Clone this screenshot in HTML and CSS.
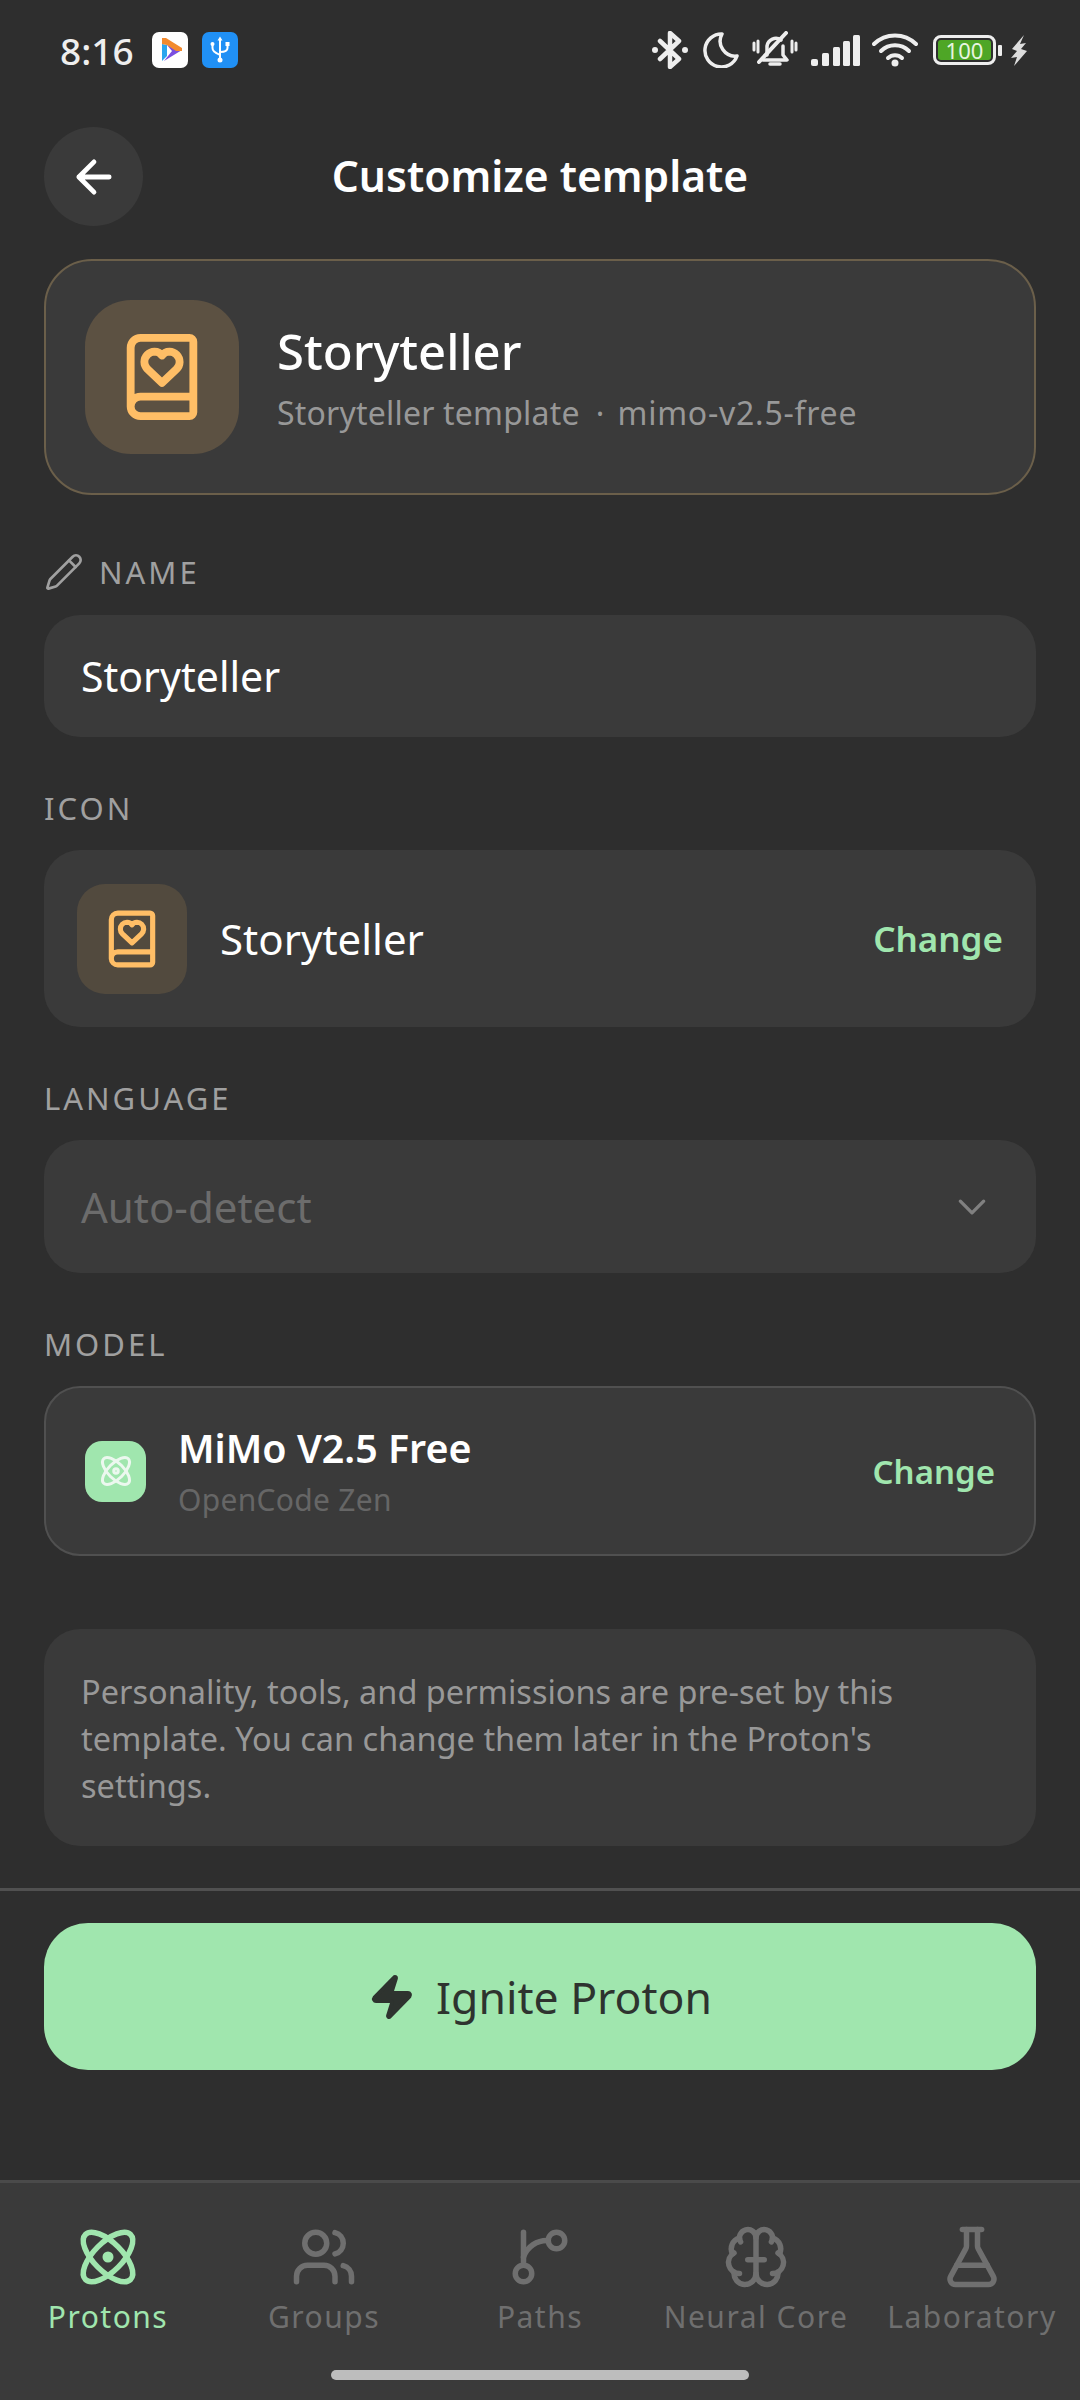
FILE: index.html
```html
<!DOCTYPE html>
<html lang="en">
<head>
    <meta charset="UTF-8">
    <meta name="viewport" content="width=device-width, initial-scale=1.0">
    <title>Customize template</title>
    <link rel="stylesheet" href="styles.css">
</head>
<body>
    <div class="status-bar">
        <span class="time">8:16</span>
        <svg class="app-badge" viewBox="0 0 36 36">
            <rect width="36" height="36" rx="7" fill="#fff"/>
            <path d="M10 12l5 1v11l-5 5z" fill="#2aa5ee"/>
            <path d="M15 13l15 5-18 11 8-10z" fill="#7a4fe0"/>
            <path d="M10 6h4l16 10v3h-6l-9-6-5-1z" fill="#f28a2e"/>
        </svg>
        <svg class="app-badge" viewBox="0 0 36 36" fill="none" stroke="#fff" stroke-width="2" stroke-linecap="round">
            <rect width="36" height="36" rx="7" fill="#2090f5" stroke="none"/>
            <path d="M18 7v22M10.500 13v3c0 3 2 4 7.500 7M25.500 13v3c0 3-2 4-7.500 4"/>
            <path d="M18 4.500l-2.500 4h5z" fill="#fff" stroke="none"/>
            <circle cx="18" cy="28" r="2.500" fill="#fff" stroke="none"/>
            <circle cx="10.500" cy="12" r="2" fill="#fff" stroke="none"/>
            <rect x="23.500" y="10" width="4" height="4" fill="#fff" stroke="none"/>
        </svg>
        <div class="status-right">
            <svg class="st-bt" viewBox="0 0 36 38" fill="none" stroke="#eee" stroke-width="4.500" stroke-linecap="round" stroke-linejoin="round">
                <path d="M8 10l19 18-9 8V2l9 8L8 28"/>
                <circle cx="3" cy="19" r="3" fill="#eee" stroke="none"/>
                <circle cx="33" cy="19" r="3" fill="#eee" stroke="none"/>
            </svg>
            <svg class="st-moon" viewBox="0 0 36 36" fill="none" stroke="#eee" stroke-width="3.500" stroke-linecap="round" stroke-linejoin="round">
                <path d="M19 2A16.500 16.500 0 1 0 34 24 15 15 0 0 1 19 2z"/>
            </svg>
            <svg class="st-bell" viewBox="0 0 46 38" fill="none" stroke="#eee" stroke-width="3.500" stroke-linecap="round" stroke-linejoin="round">
                <path d="M15 24v-9a9 9 0 0 1 14-6M31 15v9l4 5H11"/>
                <path d="M18 33h10"/>
                <path d="M34 2L7 31" stroke-width="4"/>
                <path d="M2 12v7M6 10v11M40 10v11M44 12v7" stroke-width="3"/>
            </svg>
            <svg class="st-signal" viewBox="0 0 49 31" fill="#eee">
                <rect x="0" y="24" width="7" height="7" rx="2"/>
                <rect x="11" y="18" width="7" height="13" rx="1.500"/>
                <rect x="22" y="12" width="7" height="19" rx="1.500"/>
                <rect x="32" y="6" width="7" height="25" rx="1.500"/>
                <rect x="42" y="0" width="7" height="31" rx="1.500"/>
            </svg>
            <svg class="st-wifi" viewBox="0 0 46 34" fill="none" stroke="#eee" stroke-width="4" stroke-linecap="round">
                <path d="M2 11a30 30 0 0 1 42 0"/>
                <path d="M9 18a20 20 0 0 1 28 0"/>
                <path d="M16 25a10 10 0 0 1 14 0"/>
                <circle cx="23" cy="30" r="3.500" fill="#eee" stroke="none"/>
            </svg>
            <div class="battery">
                <div class="battery-body"><span class="battery-level">100</span></div>
                <div class="battery-tip"></div>
            </div>
            <svg class="st-bolt" viewBox="0 0 18 31" fill="#ddd">
                <path d="M14 0L2 14l5 2-6 7 6-1-3 9 13-15-6-2 5-6-6 1z"/>
            </svg>
        </div>
    </div>

    <div class="top-bar">
        <div class="back-btn">
            <svg class="icon-back" viewBox="0 0 24 24" fill="none" stroke="#fff" stroke-width="2.200" stroke-linecap="round" stroke-linejoin="round">
                <path d="M12 19l-7-7 7-7M19 12H5"/>
            </svg>
        </div>
        <h1>Customize template</h1>
    </div>

    <div class="content">
        <div class="hero-card">
            <div class="hero-icon">
                <svg class="icon-book-lg" viewBox="0 0 24 24" fill="none" stroke="#ffbe66" stroke-width="2" stroke-linecap="round" stroke-linejoin="round">
                    <path d="M16.500 8.200A2.700 2.700 0 0 0 13.900 5.500c-.8 0-1.500.4-1.900 1-.4-.6-1.100-1-1.900-1A2.700 2.700 0 0 0 7.500 8.200c0 .7.3 1.300.8 1.800L12 13.500l3.700-3.500a2.600 2.600 0 0 0 .8-1.800"/>
                    <path d="M4 19.500v-15A2.500 2.500 0 0 1 6.500 2H19a1 1 0 0 1 1 1v18a1 1 0 0 1-1 1H6.500a1 1 0 0 1 0-5H20"/>
                </svg>
            </div>
            <div>
                <div class="hero-title">Storyteller</div>
                <div class="hero-sub">Storyteller template<span class="hero-sep">·</span><span class="hero-model">mimo-v2.5-free</span></div>
            </div>
        </div>

        <div class="field-label label-name">
            <svg class="icon-pencil" viewBox="0 0 24 24" fill="none" stroke="#a0a0a0" stroke-width="1.600" stroke-linecap="round" stroke-linejoin="round">
                <path d="M21.170 6.810a2.800 2.800 0 0 0-3.980-3.990L3.840 16.170a2 2 0 0 0-.5.830l-1.320 4.360a.5.5 0 0 0 .62.620l4.350-1.320a2 2 0 0 0 .83-.5z"/>
                <path d="M15 5l4 4"/>
            </svg>
            NAME
        </div>
        <div class="input-box">Storyteller</div>

        <div class="field-label">ICON</div>
        <div class="icon-row">
            <div class="small-icon">
                <svg class="icon-book-sm" viewBox="0 0 24 24" fill="none" stroke="#ffbe66" stroke-width="2" stroke-linecap="round" stroke-linejoin="round">
                    <path d="M16.500 8.200A2.700 2.700 0 0 0 13.900 5.500c-.8 0-1.500.4-1.900 1-.4-.6-1.100-1-1.900-1A2.700 2.700 0 0 0 7.500 8.200c0 .7.3 1.300.8 1.800L12 13.500l3.700-3.500a2.600 2.600 0 0 0 .8-1.800"/>
                    <path d="M4 19.500v-15A2.500 2.500 0 0 1 6.500 2H19a1 1 0 0 1 1 1v18a1 1 0 0 1-1 1H6.500a1 1 0 0 1 0-5H20"/>
                </svg>
            </div>
            <span class="icon-name">Storyteller</span>
            <span class="change">Change</span>
        </div>

        <div class="field-label">LANGUAGE</div>
        <div class="select-box">
            <span>Auto-detect</span>
            <svg class="icon-chevron" viewBox="0 0 24 24" fill="none" stroke="#808080" stroke-width="2" stroke-linecap="round" stroke-linejoin="round">
                <path d="M5 8.500l7 7 7-7"/>
            </svg>
        </div>

        <div class="field-label">MODEL</div>
        <div class="model-card">
            <div class="model-icon">
                <svg class="icon-atom-sm" viewBox="0 0 24 24" fill="none" stroke="#ecf8ef" stroke-width="2" stroke-linecap="round" stroke-linejoin="round">
                    <circle cx="12" cy="12" r="1.500"/>
                    <path d="M20.200 20.200c2.040-2.030.02-7.360-4.500-11.900-4.540-4.520-9.870-6.540-11.900-4.500-2.040 2.030-.02 7.360 4.500 11.900 4.540 4.520 9.870 6.540 11.900 4.500z"/>
                    <path d="M15.700 15.700c4.520-4.540 6.540-9.870 4.500-11.900-2.030-2.040-7.360-.02-11.900 4.500-4.520 4.540-6.540 9.870-4.500 11.900 2.030 2.040 7.360.02 11.900-4.500z"/>
                </svg>
            </div>
            <div class="model-text">
                <div class="model-name">MiMo V2.5 Free</div>
                <div class="model-sub">OpenCode Zen</div>
            </div>
            <span class="change change-sm">Change</span>
        </div>

        <div class="info-box">Personality, tools, and permissions are pre-set by this template. You can change them later in the Proton's settings.</div>
    </div>

    <div class="action-bar">
        <div class="ignite-btn">
            <svg class="icon-zap" viewBox="0 0 24 24" fill="#2e332f" stroke="#2e332f" stroke-width="2" stroke-linecap="round" stroke-linejoin="round">
                <path d="M4 14a1 1 0 0 1-.78-1.630l9.900-10.200a.5.5 0 0 1 .86.46l-1.920 6.020A1 1 0 0 0 13 10h7a1 1 0 0 1 .78 1.630l-9.900 10.200a.5.5 0 0 1-.86-.46l1.920-6.020A1 1 0 0 0 11 14z"/>
            </svg>
            Ignite Proton
        </div>
    </div>

    <div class="tab-bar">
        <div class="tab tab-active">
            <svg class="tab-icon" viewBox="0 0 24 24" fill="none" stroke="#a0e6ae" stroke-width="2" stroke-linecap="round" stroke-linejoin="round">
                <circle cx="12" cy="12" r="1" fill="#a0e6ae"/>
                <path d="M20.200 20.200c2.040-2.030.02-7.360-4.500-11.900-4.540-4.520-9.870-6.540-11.900-4.500-2.040 2.030-.02 7.360 4.500 11.900 4.540 4.520 9.870 6.540 11.900 4.500z"/>
                <path d="M15.700 15.700c4.520-4.540 6.540-9.870 4.500-11.900-2.030-2.040-7.360-.02-11.900 4.500-4.520 4.540-6.540 9.870-4.500 11.900 2.030 2.040 7.360.02 11.900-4.500z"/>
            </svg>
            <span>Protons</span>
        </div>
        <div class="tab">
            <svg class="tab-icon" viewBox="0 0 24 24" fill="none" stroke="#6f6f6f" stroke-width="2" stroke-linecap="round" stroke-linejoin="round">
                <path d="M16 21v-2a4 4 0 0 0-4-4H6a4 4 0 0 0-4 4v2"/>
                <circle cx="9" cy="7" r="4"/>
                <path d="M22 21v-2a4 4 0 0 0-3-3.870"/>
                <path d="M16 3.130a4 4 0 0 1 0 7.750"/>
            </svg>
            <span>Groups</span>
        </div>
        <div class="tab">
            <svg class="tab-icon" viewBox="0 0 24 24" fill="none" stroke="#6f6f6f" stroke-width="2" stroke-linecap="round" stroke-linejoin="round">
                <path d="M6 3v12"/>
                <circle cx="18" cy="6" r="3"/>
                <circle cx="6" cy="18" r="3"/>
                <path d="M6 12a9 9 0 0 1 9-6"/>
            </svg>
            <span>Paths</span>
        </div>
        <div class="tab">
            <svg class="tab-icon" viewBox="0 0 24 24" fill="none" stroke="#6f6f6f" stroke-width="2" stroke-linecap="round" stroke-linejoin="round">
                <path d="M12 18V5"/>
                <path d="M9 13h6"/>
                <path d="M17.600 6.500A3 3 0 1 0 12 5a3 3 0 1 0-5.600 1.500"/>
                <path d="M18 5.120a4 4 0 0 1 2.520 5.770"/>
                <path d="M18 18a4 4 0 0 0 2-7.460"/>
                <path d="M19.970 17.480A4 4 0 1 1 12 18a4 4 0 1 1-7.970-.52"/>
                <path d="M6 18a4 4 0 0 1-2-7.460"/>
                <path d="M6 5.120a4 4 0 0 0-2.520 5.770"/>
            </svg>
            <span>Neural Core</span>
        </div>
        <div class="tab">
            <svg class="tab-icon" viewBox="0 0 24 24" fill="none" stroke="#6f6f6f" stroke-width="2" stroke-linecap="round" stroke-linejoin="round">
                <path d="M14 2v6a2 2 0 0 0 .25.96l5.500 10.080A2 2 0 0 1 18 22H6a2 2 0 0 1-1.750-2.960l5.500-10.080A2 2 0 0 0 10 8V2"/>
                <path d="M6.450 15h11.100"/>
                <path d="M8.500 2h7"/>
            </svg>
            <span>Laboratory</span>
        </div>
        <div class="home-indicator"></div>
    </div>
</body>
</html>
```

FILE: styles.css
```css
* {
    box-sizing: border-box;
}
body {
    margin: 0;
    width: 1080px;
    height: 2400px;
    overflow: hidden;
    display: flex;
    flex-direction: column;
    background: #2e2e2e;
    color: #fff;
    font-family: "Noto Sans", sans-serif;
}

/* status bar */
.status-bar {
    height: 100px;
    padding: 0 52px 0 60px;
    display: flex;
    align-items: center;
}
.time {
    font-size: 37px;
    font-weight: 500;
    color: #eee;
    width: 92px;
}
.app-badge {
    width: 36px;
    height: 36px;
    margin-right: 14px;
}
.status-right {
    margin-left: auto;
    display: flex;
    align-items: center;
}
.st-bt { width: 36px; height: 38px; margin-right: 15px; }
.st-moon { width: 36px; height: 36px; margin-right: 13px; }
.st-bell { width: 46px; height: 38px; margin-right: 13px; }
.st-signal { width: 49px; height: 31px; margin-right: 12px; }
.st-wifi { width: 46px; height: 34px; margin-right: 15px; }
.st-bolt { width: 18px; height: 31px; margin-left: 8px; }
.battery {
    display: flex;
    align-items: center;
}
.battery-body {
    width: 63px;
    height: 30px;
    border: 3px solid #eee;
    border-radius: 8px;
    padding: 2px;
}
.battery-level {
    display: block;
    height: 100%;
    background: #4ea626;
    border-radius: 3px;
    color: #e8f5e0;
    font-size: 22px;
    line-height: 20px;
    text-align: center;
}
.battery-tip {
    width: 4px;
    height: 11px;
    margin-left: 2px;
    background: #eee;
    border-radius: 1px;
}

/* header */
.top-bar {
    position: relative;
    height: 159px;
    padding: 27px 44px 0;
    flex-shrink: 0;
}
.back-btn {
    width: 99px;
    height: 99px;
    border-radius: 50%;
    background: #3a3a3a;
    display: flex;
    align-items: center;
    justify-content: center;
}
.icon-back {
    width: 52px;
    height: 52px;
}
h1 {
    position: absolute;
    top: 27px;
    left: 0;
    right: 0;
    margin: 0;
    line-height: 97px;
    text-align: center;
    font-size: 42.500px;
    font-weight: 600;
}

/* form */
.content {
    padding: 0 44px;
    flex: 1;
}
.hero-card {
    height: 236px;
    padding: 0 39px;
    display: flex;
    align-items: center;
    gap: 38px;
    background: #3a3a3a;
    border: 2px solid #6b5f4a;
    border-radius: 48px;
}
.hero-icon {
    width: 154px;
    height: 154px;
    border-radius: 46px;
    background: #5c5142;
    display: flex;
    align-items: center;
    justify-content: center;
}
.icon-book-lg {
    width: 94px;
    height: 94px;
}
.hero-title {
    font-size: 49px;
    line-height: 66px;
    font-weight: 500;
}
.hero-sub {
    font-size: 32px;
    line-height: 46px;
    margin-top: 6px;
    letter-spacing: 0.200px;
    color: #989898;
}
.hero-sep {
    margin: 0 13px 0 16px;
}
.hero-model {
    letter-spacing: 0.750px;
}
.field-label {
    height: 44px;
    margin: 49px 0 20px;
    display: flex;
    align-items: center;
    font-size: 31px;
    letter-spacing: 3px;
    color: #a0a0a0;
}
.label-name {
    margin: 55px 0 21px;
}
.icon-pencil {
    width: 40px;
    height: 40px;
    margin-right: 15px;
}
.input-box {
    height: 122px;
    padding: 0 37px;
    display: flex;
    align-items: center;
    background: #3a3a3a;
    border-radius: 36px;
    font-size: 41px;
}
.icon-row {
    height: 177px;
    padding: 0 33px;
    display: flex;
    align-items: center;
    background: #3a3a3a;
    border-radius: 36px;
}
.small-icon {
    width: 110px;
    height: 110px;
    border-radius: 28px;
    background: #524a3e;
    display: flex;
    align-items: center;
    justify-content: center;
}
.icon-book-sm {
    width: 62px;
    height: 62px;
}
.icon-name {
    margin-left: 33px;
    font-size: 42px;
}
.change {
    margin-left: auto;
    font-size: 35px;
    font-weight: 600;
    color: #a0e6ae;
}
.change-sm {
    font-size: 33px;
    margin-right: 5px;
}
.select-box {
    height: 133px;
    padding: 0 37px;
    display: flex;
    align-items: center;
    justify-content: space-between;
    background: #3a3a3a;
    border-radius: 36px;
    font-size: 42px;
    color: #6c6c6c;
}
.icon-chevron {
    width: 40px;
    height: 40px;
    margin-right: 7px;
}
.model-card {
    height: 170px;
    padding: 0 34px 0 39px;
    display: flex;
    align-items: center;
    background: #3a3a3a;
    border: 2px solid #505050;
    border-radius: 36px;
}
.model-icon {
    width: 61px;
    height: 61px;
    border-radius: 17px;
    background: #a0e6ae;
    display: flex;
    align-items: center;
    justify-content: center;
}
.icon-atom-sm {
    width: 36px;
    height: 36px;
}
.model-text {
    margin-left: 32px;
}
.model-name {
    font-size: 39.400px;
    line-height: 50px;
    font-weight: 600;
}
.model-sub {
    font-size: 30px;
    line-height: 40px;
    margin-top: 7px;
    letter-spacing: 0.300px;
    color: #666;
}
.info-box {
    margin-top: 73px;
    padding: 39px 37px 0;
    height: 217px;
    background: #3a3a3a;
    border-radius: 36px;
    font-size: 32.500px;
    line-height: 47px;
    color: #989898;
}

/* bottom action */
.action-bar {
    height: 292px;
    padding: 32px 44px 0;
    border-top: 3px solid #505050;
    flex-shrink: 0;
}
.ignite-btn {
    height: 147px;
    border-radius: 44px;
    background: #a0e6ae;
    color: #2e332f;
    display: flex;
    align-items: center;
    justify-content: center;
    gap: 20px;
    font-size: 44.500px;
}
.icon-zap {
    width: 48px;
    height: 48px;
}

/* nav */
.tab-bar {
    position: relative;
    height: 220px;
    display: flex;
    background: #3a3a3a;
    border-top: 3px solid #4a4a4a;
    flex-shrink: 0;
}
.tab {
    flex: 1;
    padding-top: 41px;
    display: flex;
    flex-direction: column;
    align-items: center;
    font-size: 30px;
    letter-spacing: 1.500px;
    white-space: nowrap;
    color: #6f6f6f;
}
.tab-active {
    color: #a0e6ae;
}
.tab-icon {
    width: 66px;
    height: 66px;
    margin-bottom: 6px;
}
.home-indicator {
    position: absolute;
    left: 331px;
    bottom: 20px;
    width: 418px;
    height: 10px;
    border-radius: 5px;
    background: #bdbdbd;
}
```
